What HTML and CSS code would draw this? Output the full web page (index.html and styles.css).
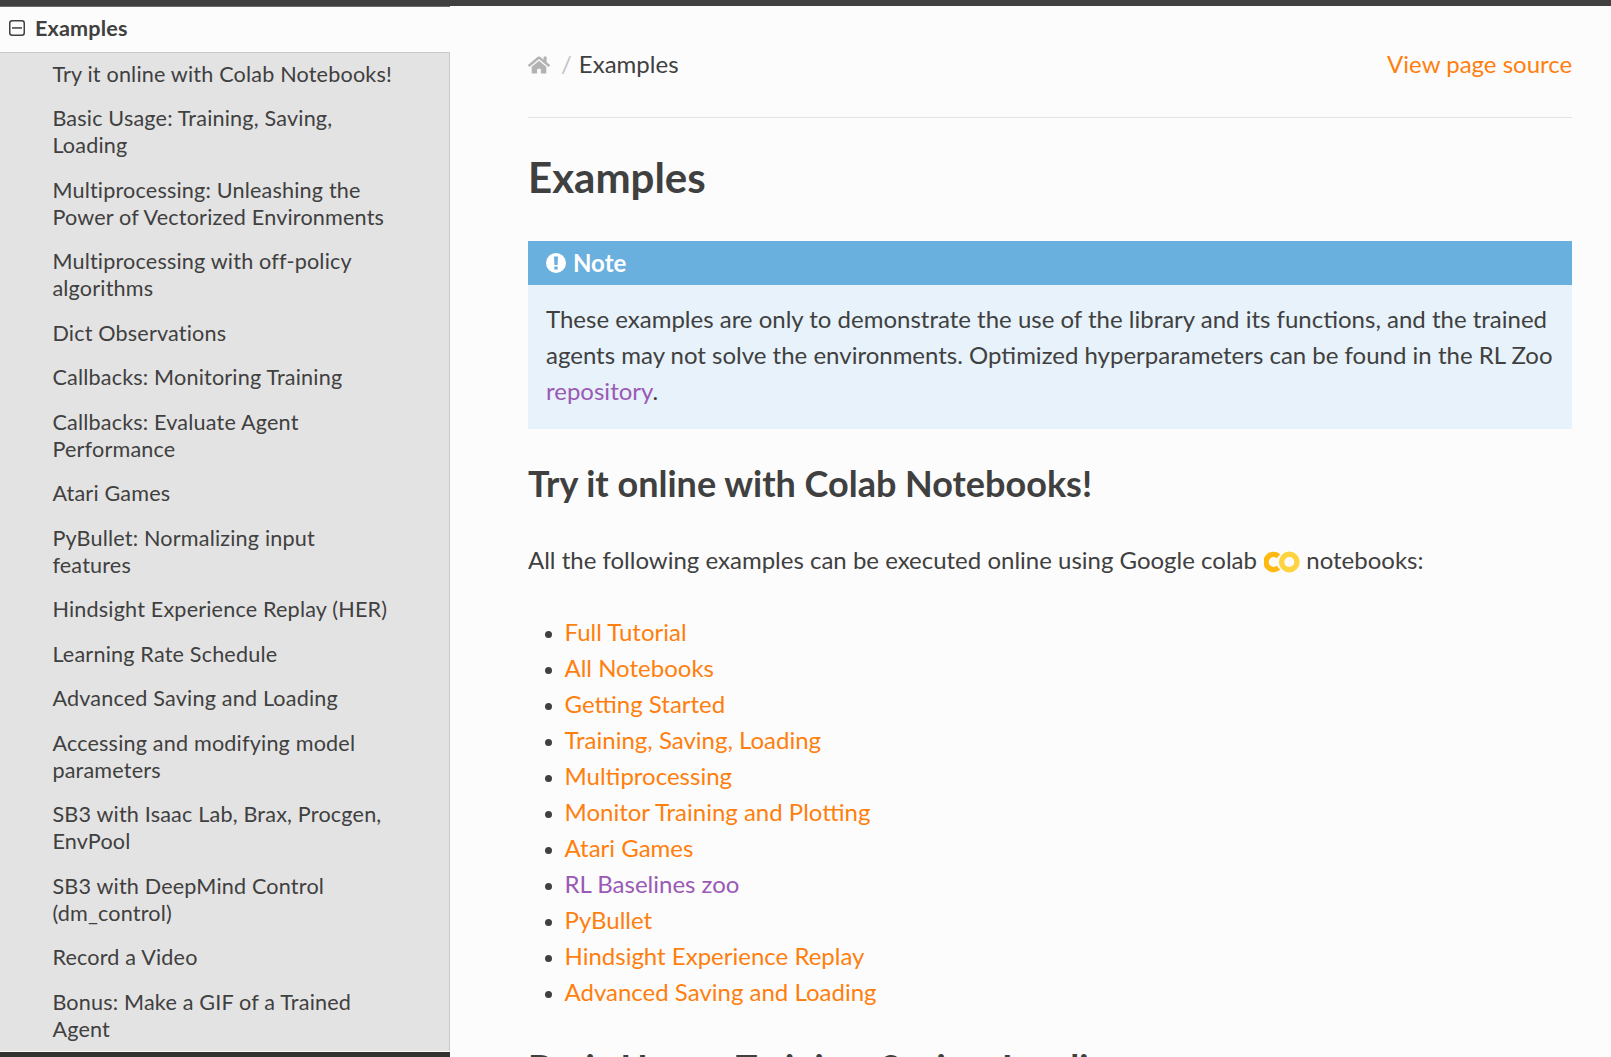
FILE: index.html
```html
<!DOCTYPE html>
<html lang="en">
<head>
<meta charset="utf-8">
<title>Examples</title>
<link rel="stylesheet" href="styles.css">
</head>
<body>
<div class="topbar"></div>
<div class="main">
  <nav class="sidebar">
    <div class="side-scroll">
      <a class="side-current" href="#">
        <svg class="minus-icon" viewBox="0 0 16 16" width="16" height="16"><rect x="0.75" y="0.75" width="14.5" height="14.5" rx="2.5" fill="none" stroke="#404040" stroke-width="1.5"/><rect x="3" y="7.2" width="10" height="1.5" fill="#404040"/></svg>
        <span>Examples</span>
      </a>
      <ul class="side-list">
        <li><a href="#">Try it online with Colab Notebooks!</a></li>
        <li><a href="#">Basic Usage: Training, Saving, Loading</a></li>
        <li><a href="#">Multiprocessing: Unleashing the Power of Vectorized Environments</a></li>
        <li><a href="#">Multiprocessing with off-policy algorithms</a></li>
        <li><a href="#">Dict Observations</a></li>
        <li><a href="#">Callbacks: Monitoring Training</a></li>
        <li><a href="#">Callbacks: Evaluate Agent Performance</a></li>
        <li><a href="#">Atari Games</a></li>
        <li><a href="#">PyBullet: Normalizing input features</a></li>
        <li><a href="#">Hindsight Experience Replay (HER)</a></li>
        <li><a href="#">Learning Rate Schedule</a></li>
        <li><a href="#">Advanced Saving and Loading</a></li>
        <li><a href="#">Accessing and modifying model parameters</a></li>
        <li><a href="#">SB3 with Isaac Lab, Brax, Procgen, EnvPool</a></li>
        <li><a href="#">SB3 with DeepMind Control (dm_control)</a></li>
        <li><a href="#">Record a Video</a></li>
        <li><a href="#">Bonus: Make a GIF of a Trained Agent</a></li>
      </ul>
    </div>
    <div class="side-footer"></div>
  </nav>
  <main class="content">
    <div class="breadcrumbs">
      <div class="crumbs">
        <svg class="home-icon" viewBox="0 0 576 512" width="22" height="20"><path fill="#b3b3b3" d="M280.37 148.26L96 300.11V464a16 16 0 0 0 16 16l112.06-.29a16 16 0 0 0 15.92-16V368a16 16 0 0 1 16-16h64a16 16 0 0 1 16 16v95.64a16 16 0 0 0 16 16.05L464 480a16 16 0 0 0 16-16V300L295.67 148.26a12.19 12.19 0 0 0-15.3 0zM571.6 251.47L488 182.56V44.05a12 12 0 0 0-12-12h-56a12 12 0 0 0-12 12v72.61L318.47 43a48 48 0 0 0-61 0L4.34 251.47a12 12 0 0 0-1.6 16.9l25.5 31A12 12 0 0 0 45.15 301l235.22-193.74a12.19 12.19 0 0 1 15.3 0L530.9 301a12 12 0 0 0 16.9-1.6l25.5-31a12 12 0 0 0-1.7-16.93z"/></svg>
        <span class="crumb-sep">/</span>
        <span>Examples</span>
      </div>
      <a class="source-link" href="#">View page source</a>
    </div>
    <hr class="rule">
    <h1>Examples</h1>
    <div class="note">
      <p class="note-title">
        <svg class="note-icon" viewBox="0 0 20 20" width="20" height="20"><path fill="#fff" fill-rule="evenodd" d="M10 0a10 10 0 1 0 0 20a10 10 0 0 0 0-20zM8 3.5h4l-.4 8.5H8.4zM8.3 13.5h3.4v3H8.3z"/></svg>
        <span>Note</span>
      </p>
      <p class="note-body">These examples are only to demonstrate the use of the library and its functions, and the trained agents may not solve the environments. Optimized hyperparameters can be found in the RL Zoo <a class="visited" href="#">repository</a>.</p>
    </div>
    <h2>Try it online with Colab Notebooks!</h2>
    <p class="para">All the following examples can be executed online using Google colab
      <svg class="colab-logo" viewBox="0 0 36 22" width="36" height="22"><circle cx="25.3" cy="11" r="7.7" fill="none" stroke="#ffd23f" stroke-width="5.4"/><path d="M14.5 5.2a7.6 7.6 0 1 0 0 11.6" fill="none" stroke="#ffb80f" stroke-width="5.4"/></svg>
      notebooks:</p>
    <ul class="links">
      <li><a href="#">Full Tutorial</a></li>
      <li><a href="#">All Notebooks</a></li>
      <li><a href="#">Getting Started</a></li>
      <li><a href="#">Training, Saving, Loading</a></li>
      <li><a href="#">Multiprocessing</a></li>
      <li><a href="#">Monitor Training and Plotting</a></li>
      <li><a href="#">Atari Games</a></li>
      <li><a class="visited" href="#">RL Baselines zoo</a></li>
      <li><a href="#">PyBullet</a></li>
      <li><a href="#">Hindsight Experience Replay</a></li>
      <li><a href="#">Advanced Saving and Loading</a></li>
    </ul>
    <h2>Basic Usage: Training, Saving, Loading</h2>
  </main>
</div>
</body>
</html>
```

FILE: styles.css
```css
* { box-sizing: border-box; }
html, body { margin: 0; padding: 0; height: 100%; overflow: hidden; }
body {
  display: flex;
  flex-direction: column;
  font-family: Lato, "Liberation Sans", sans-serif;
  font-size: 24px;
  line-height: 36px;
  color: #404040;
  background: #fcfcfc;
}
a { text-decoration: none; color: #ff7f0e; }
a.visited { color: #9b59b6; }

.topbar { flex: none; height: 6px; background: #404040; }
.main { flex: 1; min-height: 0; display: flex; }

.sidebar { flex: none; width: 450px; display: flex; flex-direction: column; border-top: 1px solid #6a6a6a; }
.side-scroll { flex: 1; min-height: 0; overflow: hidden; }
.side-footer { flex: none; height: 5px; background: #343131; }
.side-current {
  display: flex;
  align-items: center;
  gap: 10px;
  height: 46px;
  padding: 0 0 3px 9px;
  font-size: 21.6px;
  line-height: 27px;
  font-weight: 700;
  letter-spacing: 0.15px;
  color: #404040;
  border-bottom: 1px solid #c9c9c9;
}
.minus-icon { flex: none; }
.side-list { list-style: none; margin: 0; padding: 0; background: #e3e3e3; border-right: 1px solid #c9c9c9; }
.side-list a {
  display: block;
  padding: 8.75px 54px 8.75px 52.4px;
  font-size: 21.6px;
  line-height: 27px;
  letter-spacing: 0.18px;
  color: #404040;
}
.side-list li:first-child a { padding-top: 7.74px; }

.content { flex: 1; min-width: 0; max-width: 1200px; padding: 38.8px 38.8px 0 78px; overflow: hidden; }
.breadcrumbs { display: flex; justify-content: space-between; align-items: center; height: 36px; padding-top: 2px; }
.crumbs { display: flex; align-items: center; }
.home-icon { flex: none; margin-top: 2px; }
.crumb-sep { color: #c4c4c4; margin: 0 7px 0 11px; }
.rule { height: 1px; border: 0; border-top: 1px solid #e1e4e5; margin: 36px 0; }
h1 { font-size: 42px; line-height: 46px; font-weight: 700; margin: 0 0 41px; }
h2 { font-size: 36px; line-height: 43px; font-weight: 700; margin: 0 0 37px; }
.note { background: #e7f2fa; padding: 18px 18px 20px; margin: 0 0 33px; }
.note-title {
  display: flex;
  align-items: center;
  gap: 7px;
  margin: -18px -18px 16px;
  padding: 3px 18px;
  height: 44px;
  background: #6ab0de;
  color: #fff;
  font-weight: 700;
}
.note-icon { flex: none; }
.note-body { margin: 0; }
.para { margin: 0 0 36px; }
.colab-logo { vertical-align: -4px; margin-left: 1px; }
.links { list-style: none; margin: 0 0 36px; padding: 0 0 0 36.5px; }
.links li { display: flex; align-items: center; line-height: 36px; }
.links li::before {
  content: "";
  flex: none;
  width: 7px;
  height: 7px;
  margin: 6px 13px 0 -20px;
  border-radius: 50%;
  background: #404040;
}
```
